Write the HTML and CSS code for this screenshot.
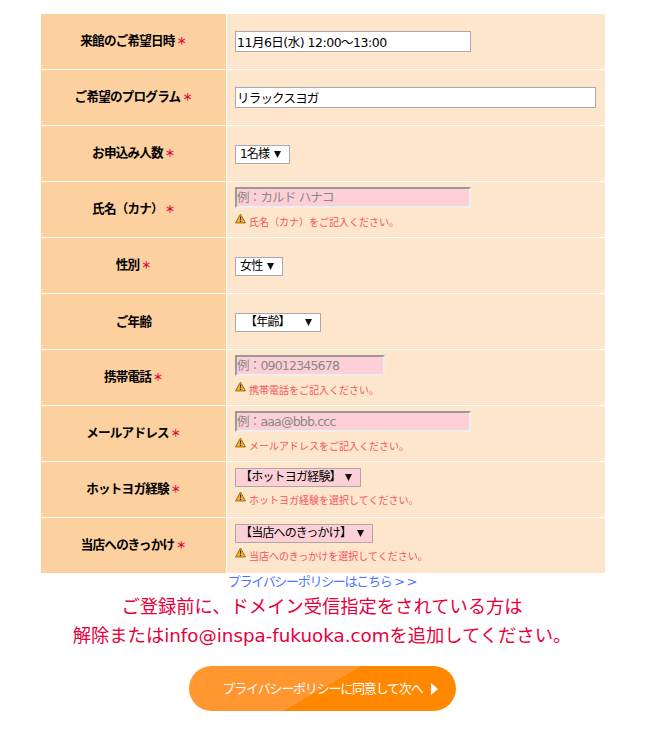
FILE: index.html
```html
<!DOCTYPE html>
<html lang="ja">
<head>
<meta charset="utf-8">
<title>お申込み</title>
<link rel="stylesheet" href="styles.css">
</head>
<body>
<svg class="defs" width="0" height="0" aria-hidden="true">
  <symbol id="warn" viewBox="0 0 12 11">
    <path d="M6 .6 11.5 10.4H.5Z" fill="#f7a825" stroke="#8a6410" stroke-width=".9" stroke-linejoin="round"/>
    <path d="M5.4 3.4h1.2l-.2 3.8h-.8ZM5.4 8h1.2v1.2H5.4Z" fill="#33280f"/>
  </symbol>
</svg>
<main class="page">
  <form class="entry">
    <table class="form-table">
      <tr>
        <th>来館のご希望日時<span class="req">＊</span></th>
        <td><input class="field w-m date" type="text" value="11月6日(水) 12:00～13:00"></td>
      </tr>
      <tr>
        <th>ご希望のプログラム<span class="req">＊</span></th>
        <td><input class="field w-l" type="text" value="リラックスヨガ"></td>
      </tr>
      <tr>
        <th>お申込み人数<span class="req">＊</span></th>
        <td><select class="pick"><option>1名様</option></select></td>
      </tr>
      <tr>
        <th>氏名（カナ）<span class="req">＊</span></th>
        <td class="has-err">
          <input class="field w-m bad" type="text" placeholder="例：カルド ハナコ">
          <p class="err"><svg class="warn"><use href="#warn"/></svg>氏名（カナ）をご記入ください。</p>
        </td>
      </tr>
      <tr>
        <th>性別<span class="req">＊</span></th>
        <td><select class="pick"><option>女性</option></select></td>
      </tr>
      <tr>
        <th>ご年齢</th>
        <td><select class="pick age"><option>【年齢】</option></select></td>
      </tr>
      <tr>
        <th>携帯電話<span class="req">＊</span></th>
        <td class="has-err">
          <input class="field w-s bad" type="text" placeholder="例：09012345678">
          <p class="err"><svg class="warn"><use href="#warn"/></svg>携帯電話をご記入ください。</p>
        </td>
      </tr>
      <tr>
        <th>メールアドレス<span class="req">＊</span></th>
        <td class="has-err">
          <input class="field w-m bad" type="text" placeholder="例：aaa@bbb.ccc">
          <p class="err"><svg class="warn"><use href="#warn"/></svg>メールアドレスをご記入ください。</p>
        </td>
      </tr>
      <tr>
        <th>ホットヨガ経験<span class="req">＊</span></th>
        <td class="has-err pick-err">
          <select class="pick bad-pick"><option>【ホットヨガ経験】</option></select>
          <p class="err"><svg class="warn"><use href="#warn"/></svg>ホットヨガ経験を選択してください。</p>
        </td>
      </tr>
      <tr>
        <th>当店へのきっかけ<span class="req">＊</span></th>
        <td class="has-err pick-err">
          <select class="pick bad-pick"><option>【当店へのきっかけ】</option></select>
          <p class="err"><svg class="warn"><use href="#warn"/></svg>当店へのきっかけを選択してください。</p>
        </td>
      </tr>
    </table>
    <p class="policy"><a href="#">プライバシーポリシーはこちら &gt; &gt;</a></p>
    <p class="notice">ご登録前に、ドメイン受信指定をされている方は<br>解除またはinfo@inspa-fukuoka.comを追加してください。</p>
    <div class="actions">
      <button class="next" type="button"><span class="next-label">プライバシーポリシーに同意して次へ</span><svg class="next-arrow" viewBox="0 0 7 12"><path d="M0 0 7 6 0 12Z" fill="#fff"/></svg></button>
    </div>
  </form>
</main>
</body>
</html>
```
FILE: styles.css
```css
* { box-sizing: border-box; }
html, body { margin: 0; padding: 0; background: #fff; }
body {
  font-family: "DejaVu Sans", "Noto Sans CJK JP", sans-serif;
  color: #000;
  overflow: hidden;
}
.defs { position: absolute; }
.page { padding: 14px 0 0 41px; width: 605px; }
.form-table {
  width: 564px;
  border-collapse: separate;
  border-spacing: 0;
  table-layout: fixed;
}
.form-table tr { height: 56px; }
.form-table th {
  width: 186px;
  background: #fdd09f;
  font-size: 12.6px;
  font-weight: 700;
  line-height: 18px;
  letter-spacing: -.8px;
  text-align: center;
  vertical-align: middle;
  padding: 0;
  border-right: 1px solid #fff;
  border-bottom: 1px solid #fff;
}
.form-table td {
  background: #fee6cc;
  padding: 0 9px 0 8px;
  vertical-align: middle;
  border-bottom: 1px solid #fff;
}
.form-table td.has-err { vertical-align: top; padding-top: 5px; }
.form-table td.pick-err { padding-top: 6px; }
.form-table tr:last-child { height: 55px; }
.form-table tr:last-child th,
.form-table tr:last-child td { border-bottom: 0; }
.req { color: #e6003c; margin-left: 2px; font-size: 10px; font-weight: 700; letter-spacing: 0; }
.field {
  display: block;
  height: 21px;
  padding: 0 1px;
  border: 1px solid #a9a9a9;
  background: #fff;
  font: 12.5px/19px "DejaVu Sans", "Noto Sans CJK JP", sans-serif;
  letter-spacing: -.8px;
  color: #000;
  border-radius: 0;
  outline: 0;
}
.date { letter-spacing: -.5px; }
.w-s { width: 150px; }
.w-m { width: 236px; }
.w-l { width: 361px; }
.bad {
  background: #fcd0d6;
  border-style: solid;
  border-width: 2px;
  border-color: #999 #eee #eee #999;
  padding: 0;
}
.bad::placeholder { color: #888; opacity: 1; }
.pick {
  display: block;
  appearance: none;
  -webkit-appearance: none;
  height: 19px;
  margin-top: 2px;
  padding: 0 19px 0 4px;
  border: 1px solid #a9a9a9;
  border-radius: 0;
  color: #000;
  font: 12px/17px "DejaVu Sans", "Noto Sans CJK JP", sans-serif;
  letter-spacing: -.8px;
  background: #fff url("data:image/svg+xml,%3Csvg xmlns='http://www.w3.org/2000/svg' width='7' height='7'%3E%3Cpath d='M0 0h7L3.5 7z' fill='%23111'/%3E%3C/svg%3E") no-repeat right 8px center;
}
.age { width: 86px; padding-left: 9px; }
.bad-pick { background-color: #fcd0d6; margin-top: 0; }
.err {
  display: flex;
  align-items: center;
  margin: 8px 0 0;
  font-size: 10px;
  line-height: 14px;
  color: #f4535f;
}
.pick-err .err { margin-top: 7px; }
.warn { width: 11px; height: 11px; margin: -9px 3px 0 0; flex: none; }
.policy { margin: 0; padding-right: 2px; text-align: center; font-size: 13px; line-height: 17px; letter-spacing: -1.3px; }
.policy a { color: #4d74ff; text-decoration: none; }
.notice {
  margin: 2px 0 0;
  padding-right: 2px;
  text-align: center;
  font-size: 18.3px;
  line-height: 29px;
  color: #e6003c;
}
.actions { display: flex; justify-content: center; margin: 16px 1px 0 0; }
.next {
  position: relative;
  display: flex;
  align-items: center;
  justify-content: center;
  gap: 9px;
  width: 267px;
  height: 45px;
  border: 0;
  border-radius: 23px;
  padding: 0 0 0 16px;
  color: #fff;
  font: 13px/18px "DejaVu Sans", "Noto Sans CJK JP", sans-serif;
  letter-spacing: -1.2px;
  background: linear-gradient(150deg, #ff9630 0, #ff9630 50%, #ff8800 50%, #ff8800 100%);
}
.next-arrow { width: 7px; height: 12px; margin-top: 1px; }
```
